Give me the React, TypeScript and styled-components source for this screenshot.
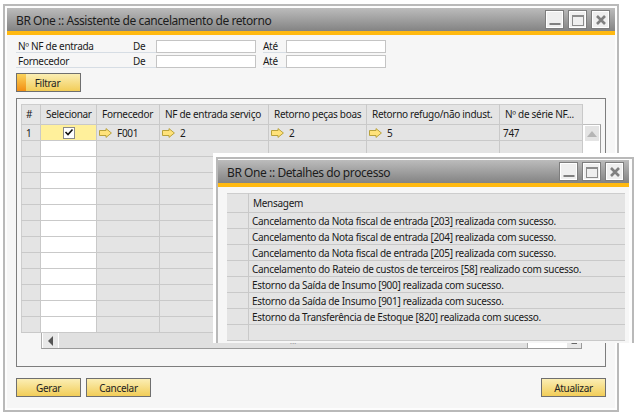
import React, { FC } from 'react';
import styled, { createGlobalStyle } from 'styled-components';

const columns = [
  { title: '#', width: 20 },
  { title: 'Selecionar', width: 56 },
  { title: 'Fornecedor', width: 63 },
  { title: 'NF de entrada serviço', width: 109 },
  { title: 'Retorno peças boas', width: 98 },
  { title: 'Retorno refugo/não indust.', width: 133 },
  { title: 'Nº de série NF...', width: 83 },
];
const gridTemplate = columns.map((c) => `${c.width}px`).join(' ');

const messages = [
  'Cancelamento da Nota fiscal de entrada [203] realizada com sucesso.',
  'Cancelamento da Nota fiscal de entrada [204] realizada com sucesso.',
  'Cancelamento da Nota fiscal de entrada [205] realizada com sucesso.',
  'Cancelamento do Rateio de custos de terceiros [58] realizado com sucesso.',
  'Estorno da Saída de Insumo [900] realizada com sucesso.',
  'Estorno da Saída de Insumo [901] realizada com sucesso.',
  'Estorno da Transferência de Estoque [820] realizada com sucesso.',
  '',
];

const LinkArrow: FC = () => (
  <ArrowSvg width="13" height="10" viewBox="0 0 13 10">
    <path d="M0.5 2.5 H7 V0.6 L12.4 5 L7 9.4 V7.5 H0.5 Z" fill="#ffe27a" stroke="#b9a23c" strokeWidth="1" />
  </ArrowSvg>
);

const WindowControls: FC = () => (
  <Controls>
    <ControlButton>
      <svg width="12" height="12" viewBox="0 0 12 12"><rect x="0.5" y="9" width="11" height="2" fill="#808080" /></svg>
    </ControlButton>
    <ControlButton>
      <svg width="12" height="12" viewBox="0 0 12 12"><rect x="0.5" y="1.5" width="11" height="10" fill="none" stroke="#8c8c8c" /><rect x="0" y="1" width="12" height="2" fill="#8c8c8c" /></svg>
    </ControlButton>
    <ControlButton>
      <svg width="12" height="12" viewBox="0 0 12 12"><path d="M2 2 L10 10 M10 2 L2 10" stroke="#808080" strokeWidth="2.6" /></svg>
    </ControlButton>
  </Controls>
);

const FilterRow: FC<{ label: string }> = ({ label }) => (
  <FormRow>
    <FormLabel>{label}</FormLabel>
    <FormDe>De</FormDe>
    <FormInput />
    <FormAte>Até</FormAte>
    <FormInput />
  </FormRow>
);

const App: FC = () => {
  const emptyRows = Array.from({ length: 12 });

  return (
    <Page>
      <GlobalStyle />
      <MainWindow>
        <TitleBar>
          <TitleText>BR One :: Assistente de cancelamento de retorno</TitleText>
          <WindowControls />
        </TitleBar>
        <Body>
          <FilterRow label="Nº NF de entrada" />
          <FilterRow label="Fornecedor" />
          <FilterButton>Filtrar</FilterButton>
          <MatrixFrame>
            <MatrixRow>
              <Matrix>
                {columns.map((c) => (
                  <HeadCell key={c.title}>{c.title}</HeadCell>
                ))}
                <IndexCell>1</IndexCell>
                <CheckCell>
                  <CheckBox>
                    <svg width="10" height="9" viewBox="0 0 10 9">
                      <path d="M1.5 4 L4 6.5 L8.5 1.5" fill="none" stroke="#111" strokeWidth="1.6" />
                    </svg>
                  </CheckBox>
                </CheckCell>
                <Cell><LinkArrow />F001</Cell>
                <Cell><LinkArrow />2</Cell>
                <Cell><LinkArrow />2</Cell>
                <Cell><LinkArrow />5</Cell>
                <PlainCell>747</PlainCell>
                {emptyRows.map((_, i) => (
                  <React.Fragment key={i}>
                    <EmptyCell />
                    <EmptyCell $white />
                    <EmptyCell />
                    <EmptyCell />
                    <EmptyCell />
                    <EmptyCell />
                    <EmptyCell />
                  </React.Fragment>
                ))}
              </Matrix>
              <VScroll>
                <VUpButton>
                  <svg width="10" height="6" viewBox="0 0 10 6"><path d="M5 0 L10 6 H0 Z" fill="#b5b5b5" /></svg>
                </VUpButton>
              </VScroll>
            </MatrixRow>
            <HScroll>
              <HArrowButton>
                <svg width="5" height="10" viewBox="0 0 5 10"><path d="M5 0 V10 L0 5 Z" fill="#555" /></svg>
              </HArrowButton>
              <HThumb>...</HThumb>
              <HTrack />
              <HEndButton>
                <svg width="6" height="6" viewBox="0 0 6 6"><path d="M6 0 V6 H0 Z" fill="#666" /></svg>
              </HEndButton>
            </HScroll>
          </MatrixFrame>
          <Footer>
            <ActionGroup>
              <ActionButton>Gerar</ActionButton>
              <ActionButton>Cancelar</ActionButton>
            </ActionGroup>
            <ActionButton>Atualizar</ActionButton>
          </Footer>
        </Body>
      </MainWindow>

      <DetailClip>
        <DetailWindow>
          <TitleBar>
            <TitleText>BR One :: Detalhes do processo</TitleText>
            <WindowControls />
          </TitleBar>
          <DetailBody>
            <MessageGrid>
              <MessageHeadIndex />
              <MessageHead>Mensagem</MessageHead>
              {messages.map((m, i) => (
                <React.Fragment key={i}>
                  <MessageIndex />
                  <MessageCell>{m}</MessageCell>
                </React.Fragment>
              ))}
            </MessageGrid>
          </DetailBody>
        </DetailWindow>
      </DetailClip>
    </Page>
  );
};
export default App;

const GlobalStyle = createGlobalStyle`
  html, body {
    margin: 0;
    padding: 0;
    background: #fff;
  }
`;

const Page = styled.div`
  position: relative;
  width: 635px;
  height: 416px;
  padding: 4px 0 0 3px;
  box-sizing: border-box;
  overflow: hidden;
  background: #fff;
  color: #1a1a1a;
  font-family: "Noto Sans", "Open Sans", sans-serif;
  font-size: 10px;
  letter-spacing: -0.3px;
`;

const MainWindow = styled.div`
  display: flex;
  flex-direction: column;
  box-sizing: border-box;
  width: 616px;
  height: 408px;
  padding: 2px;
  border: 2px solid #b9b9b9;
  background: #fdfdfd;
`;

const TitleBar = styled.div`
  display: flex;
  flex: none;
  align-items: center;
  justify-content: space-between;
  box-sizing: border-box;
  height: 27px;
  padding: 0 5px 0 9px;
  border-bottom: 4px solid #ffb911;
  background: linear-gradient(#bcbcbc, #838383);
`;

const TitleText = styled.div`
  padding-top: 1px;
  font-size: 12px;
  letter-spacing: -0.42px;
  color: #1c1c1c;
  white-space: nowrap;
`;

const Controls = styled.div`
  display: flex;
  gap: 4px;
`;

const ControlButton = styled.div`
  display: flex;
  align-items: center;
  justify-content: center;
  box-sizing: border-box;
  width: 19px;
  height: 19px;
  border: 1px solid #7d7d7d;
  box-shadow: inset 0 0 0 1px #fff;
  background: #efefef;
`;

const Body = styled.div`
  flex: 1;
  padding: 5px 9px;
  background: #f6f6f6;
`;

const FormRow = styled.div`
  display: flex;
  align-items: stretch;
  height: 13px;
  margin-bottom: 2px;
  line-height: 13px;
`;

const FormLabel = styled.div`
  box-sizing: border-box;
  width: 117px;
  padding-left: 2px;
  border-bottom: 1px solid #d6dde4;
`;

const FormDe = styled.div`
  box-sizing: border-box;
  width: 23px;
  border-bottom: 1px solid #d6dde4;
`;

const FormAte = styled.div`
  box-sizing: border-box;
  width: 23px;
  margin-left: 7px;
  border-bottom: 1px solid #d6dde4;
`;

const FormInput = styled.div`
  box-sizing: border-box;
  width: 100px;
  border: 1px solid #c4c4c4;
  background: #fff;
`;

const ButtonBase = styled.div`
  display: flex;
  align-items: center;
  justify-content: center;
  box-sizing: border-box;
  width: 65px;
  height: 19px;
  border: 1px solid #6f6f6f;
  background: linear-gradient(#fbeeb4, #f2cd58);
  color: #222;
  font-size: 10px;
`;

const FilterButton = styled(ButtonBase)`
  margin-top: 5px;
  padding-right: 2px;
  background: linear-gradient(#fbd35a, #f28f14) 0 0 / 9px 100% no-repeat,
    linear-gradient(#fbeeb4, #f2cd58);
`;

const ActionGroup = styled.div`
  display: flex;
  gap: 5px;
`;

const ActionButton = styled(ButtonBase)``;

const Footer = styled.div`
  display: flex;
  justify-content: space-between;
  width: 590px;
  margin-top: 11px;
`;

const MatrixFrame = styled.div`
  box-sizing: border-box;
  width: 590px;
  height: 269px;
  margin-top: 6px;
  padding: 5px 4px 0;
  border: 1px solid #7d7d7d;
  background: #f6f6f6;
`;

const MatrixRow = styled.div`
  display: flex;
`;

const Matrix = styled.div`
  display: grid;
  grid-template-columns: ${gridTemplate};
  grid-template-rows: 21px 16px repeat(12, 16px);
  box-sizing: border-box;
  width: 562px;
  box-shadow: inset 1px 1px 0 #cdcdcd;
  background: #e4e4e4;
`;

const CellBase = styled.div`
  display: flex;
  align-items: center;
  box-sizing: border-box;
  border-right: 1px solid #c9c9c9;
  border-bottom: 1px solid #c9c9c9;
  white-space: nowrap;
  overflow: hidden;
`;

const HeadCell = styled(CellBase)`
  padding-left: 5px;
`;

const IndexCell = styled(CellBase)`
  padding-left: 5px;
`;

const CheckCell = styled(CellBase)`
  justify-content: center;
  background: #fff09b;
`;

const CheckBox = styled.div`
  display: flex;
  align-items: center;
  justify-content: center;
  box-sizing: border-box;
  width: 12px;
  height: 12px;
  border: 1px solid #8a8a8a;
  background: #fff;
`;

const Cell = styled(CellBase)`
  padding-left: 2px;
`;

const PlainCell = styled(CellBase)`
  padding-left: 3px;
`;

const ArrowSvg = styled.svg`
  flex: none;
  margin-right: 5px;
`;

const EmptyCell = styled(CellBase)<{ $white?: boolean }>`
  background: ${(p) => (p.$white ? '#fff' : 'transparent')};
`;

const VScroll = styled.div`
  box-sizing: border-box;
  width: 18px;
  margin-top: 20px;
  padding: 1px 1px 0 2px;
  border-top: 1px solid #bdbdbd;
  border-right: 1px solid #9a9a9a;
  background: #fff;
`;

const VUpButton = styled.div`
  display: flex;
  align-items: center;
  justify-content: center;
  height: 15px;
  background: #e4e4e4;
`;

const HScroll = styled.div`
  display: flex;
  box-sizing: border-box;
  width: 541px;
  height: 16px;
  margin-left: 20px;
  border-left: 1px solid #b0b0b0;
  border-right: 1px solid #9a9a9a;
  border-bottom: 1px solid #9a9a9a;
  background: #fff;
`;

const HArrowButton = styled.div`
  display: flex;
  flex: none;
  align-items: center;
  justify-content: center;
  width: 15px;
  border-left: 1px solid #fff;
  background: #e8e8e8;
`;

const HThumb = styled.div`
  display: flex;
  flex: none;
  align-items: center;
  justify-content: center;
  box-sizing: border-box;
  width: 470px;
  border-left: 1px solid #fff;
  border-right: 1px solid #a8a8a8;
  background: #e0e0e0;
  color: #9a9a9a;
  font-size: 9px;
`;

const HTrack = styled.div`
  flex: 1;
`;

const HEndButton = styled.div`
  display: flex;
  flex: none;
  align-items: center;
  justify-content: center;
  width: 14px;
  background: #e8e8e8;
`;

const DetailClip = styled.div`
  position: absolute;
  top: 153px;
  left: 213px;
  box-sizing: border-box;
  width: 422px;
  height: 190px;
  padding: 4px 1px 0 3px;
  overflow: hidden;
  background: #fff;
`;

const DetailWindow = styled.div`
  box-sizing: border-box;
  height: 220px;
  padding: 1px 3px 0 0;
  border: 2px solid #b9b9b9;
  background: #fdfdfd;
`;

const DetailBody = styled.div`
  height: 200px;
  padding: 6px 4px 0 9px;
  background: #f6f6f6;
`;

const MessageGrid = styled.div`
  display: grid;
  grid-template-columns: 22px 1fr;
  grid-template-rows: 20px;
  grid-auto-rows: 16px;
  box-shadow: inset 0 1px 0 #cdcdcd;
  background: #e4e4e4;
`;

const MessageHeadIndex = styled(CellBase)``;

const MessageHead = styled(CellBase)`
  padding-left: 4px;
  border-right: 0;
`;

const MessageIndex = styled(CellBase)``;

const MessageCell = styled(CellBase)`
  padding-left: 3px;
  border-right: 0;
`;
